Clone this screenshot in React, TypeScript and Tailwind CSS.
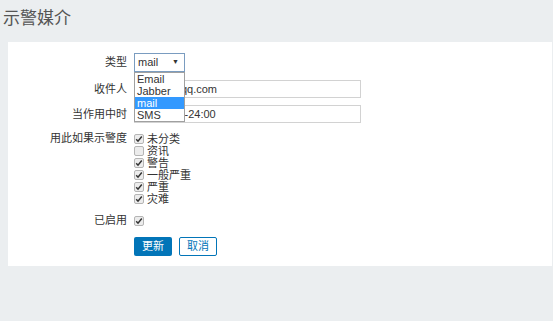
import React from "react";

const font = { fontFamily: '"Liberation Sans", "Noto Sans CJK SC", sans-serif' };

function Check({ checked }: { checked: boolean }) {
  return (
    <span className="inline-flex w-[10px] h-[10px] items-center justify-center rounded-[2px] border border-[#b5b5b5] bg-[#ececec] shrink-0">
      {checked && (
        <svg width="8" height="8" viewBox="0 0 8 8">
          <path d="M1.2 4.3 L3 6.2 L6.8 1.5" fill="none" stroke="#333" strokeWidth="1.5" />
        </svg>
      )}
    </span>
  );
}

const severities: [string, boolean][] = [
  ["未分类", true],
  ["资讯", false],
  ["警告", true],
  ["一般严重", true],
  ["严重", true],
  ["灾难", true],
];

function Row({ label, children, className = "" }: { label: string; children: React.ReactNode; className?: string }) {
  return (
    <div className={"flex items-start " + className}>
      <div className="w-[126px] pr-[7px] text-right text-[11px] text-[#333] leading-[19px]">{label}</div>
      <div className="flex-1">{children}</div>
    </div>
  );
}

export default function App() {
  return (
    <div className="w-[553px] h-[321px] bg-[#ebeef0] overflow-hidden" style={font}>
      <div className="h-[42px] pl-[3px] pt-[7px] text-[17px] text-[#555] leading-[24px]">示警媒介</div>
      <div className="ml-[8px] mr-[1px] bg-white pt-[11px] pb-[10px]">
        <Row label="类型">
          <div className="relative w-[51px]">
            <div className="h-[19px] border border-[#7a9cc0] flex items-center justify-between pl-[3px] pr-[5px] text-[11px] text-[#333]">
              <span>mail</span>
              <span className="text-[7px]">▼</span>
            </div>
            <div className="absolute left-0 top-[19px] w-[51px] border border-[#a0a0a0] bg-white text-[11px] leading-[12px] text-[#333] z-10">
              <div className="pl-[2px]">Email</div>
              <div className="pl-[2px]">Jabber</div>
              <div className="pl-[2px] bg-[#3399ff] text-white">mail</div>
              <div className="pl-[2px]">SMS</div>
            </div>
          </div>
        </Row>
        <Row label="收件人" className="mt-[8px]">
          <div className="w-[227px] h-[18px] border border-[#d2d2d2] pl-[3px] text-[11px] leading-[16px] text-[#333]">
            zabbix@qq.com
          </div>
        </Row>
        <Row label="当作用中时" className="mt-[6px]">
          <div className="w-[227px] h-[18px] border border-[#d2d2d2] pl-[3px] text-[11px] leading-[16px] text-[#333]">
            1-7,00:00-24:00
          </div>
        </Row>
        <Row label="用此如果示警度" className="mt-[5px]">
          <div className="flex flex-col pt-[4px]">
            {severities.map(([name, c]) => (
              <div key={name} className="flex items-center gap-[3px] h-[12px] text-[11px] text-[#333]">
                <Check checked={c} />
                <span>{name}</span>
              </div>
            ))}
          </div>
        </Row>
        <Row label="已启用" className="mt-[6px]">
          <div className="h-[19px] flex items-center">
            <Check checked={true} />
          </div>
        </Row>
        <div className="flex pl-[126px] gap-[7px] mt-[7px]">
          <button className="w-[38px] h-[19px] bg-[#0275b8] text-white text-[11px] rounded-[2px] leading-[19px]">更新</button>
          <button className="w-[38px] h-[19px] bg-white border border-[#0275b8] text-[#0275b8] text-[11px] rounded-[2px] leading-[17px]">取消</button>
        </div>
      </div>
    </div>
  );
}
